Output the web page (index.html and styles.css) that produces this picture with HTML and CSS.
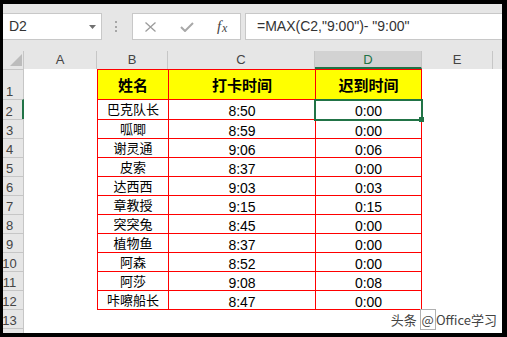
FILE: index.html
```html
<!DOCTYPE html>
<html>
<head>
<meta charset="utf-8">
<link rel="stylesheet" href="styles.css">
</head>
<body>
<div class="frame">
  <div class="fbar">
    <div class="namebox">
      <span class="ref">D2</span>
      <svg class="caret" width="7" height="4" viewBox="0 0 7 4"><polygon points="0,0 7,0 3.5,4" fill="#707070"/></svg>
    </div>
    <div class="grip"><i></i><i></i><i></i></div>
    <div class="fbtns">
      <span class="btn"><svg width="11" height="10" viewBox="0 0 11 10"><path d="M0.5 0.5 L10.5 9.5 M10.5 0.5 L0.5 9.5" stroke="#9c9c9c" stroke-width="1.3" fill="none"/></svg></span>
      <span class="btn"><svg width="14" height="10" viewBox="0 0 14 10"><path d="M1 5 L5 9 L13 1" stroke="#a8a8a8" stroke-width="2" fill="none"/></svg></span>
      <span class="btn fx"><i>f</i><i class="x">x</i></span>
    </div>
    <div class="finput">=MAX(C2,"9:00")- "9:00"</div>
  </div>
  <div class="sheet">
    <div class="ch corner"><svg width="20" height="18" viewBox="0 0 20 18"><polygon points="19,3 19,15 7,15" fill="#bcbcbc"/></svg></div>
    <div class="ch">A</div>
    <div class="ch">B</div>
    <div class="ch">C</div>
    <div class="ch sel">D</div>
    <div class="ch">E</div>
    <div class="ch last"></div>

    <div class="rh">1</div><div class="c"></div><div class="t h">姓名</div><div class="t h">打卡时间</div><div class="t h d">迟到时间</div><div class="c"></div><div class="c"></div>
    <div class="rh cur">2</div><div class="c"></div><div class="t n">巴克队长</div><div class="t m">8:50</div><div class="t m d active">0:00<div class="selbox"><div class="handle"></div></div></div><div class="c"></div><div class="c"></div>
    <div class="rh">3</div><div class="c"></div><div class="t n">呱唧</div><div class="t m">8:59</div><div class="t m d">0:00</div><div class="c"></div><div class="c"></div>
    <div class="rh">4</div><div class="c"></div><div class="t n">谢灵通</div><div class="t m">9:06</div><div class="t m d">0:06</div><div class="c"></div><div class="c"></div>
    <div class="rh">5</div><div class="c"></div><div class="t n">皮索</div><div class="t m">8:37</div><div class="t m d">0:00</div><div class="c"></div><div class="c"></div>
    <div class="rh">6</div><div class="c"></div><div class="t n">达西西</div><div class="t m">9:03</div><div class="t m d">0:03</div><div class="c"></div><div class="c"></div>
    <div class="rh">7</div><div class="c"></div><div class="t n">章教授</div><div class="t m">9:15</div><div class="t m d">0:15</div><div class="c"></div><div class="c"></div>
    <div class="rh">8</div><div class="c"></div><div class="t n">突突兔</div><div class="t m">8:45</div><div class="t m d">0:00</div><div class="c"></div><div class="c"></div>
    <div class="rh">9</div><div class="c"></div><div class="t n">植物鱼</div><div class="t m">8:37</div><div class="t m d">0:00</div><div class="c"></div><div class="c"></div>
    <div class="rh">10</div><div class="c"></div><div class="t n">阿森</div><div class="t m">8:52</div><div class="t m d">0:00</div><div class="c"></div><div class="c"></div>
    <div class="rh">11</div><div class="c"></div><div class="t n">阿莎</div><div class="t m">9:08</div><div class="t m d">0:08</div><div class="c"></div><div class="c"></div>
    <div class="rh">12</div><div class="c"></div><div class="t n">咔嚓船长</div><div class="t m">8:47</div><div class="t m d">0:00</div><div class="c"></div><div class="c"></div>
    <div class="rh">13</div><div class="c"></div><div class="c tb"></div><div class="c tb"></div><div class="c tb tbd"></div><div class="c"></div><div class="c"></div>
    <div class="rh"></div><div class="c"></div><div class="c"></div><div class="c"></div><div class="c"></div><div class="c"></div><div class="c"></div>
  </div>
  <div class="wm">头条 <span class="at">@</span>Office学习</div>
</div>
</body>
</html>
```

FILE: styles.css
```css
* {
  box-sizing: border-box;
  margin: 0;
  padding: 0;
}

body {
  margin: 0;
  width: 507px;
  height: 337px;
  overflow: hidden;
  background: #000;
}

.frame {
  position: relative;
  width: 507px;
  height: 337px;
  border-style: solid;
  border-color: #000;
  border-width: 4px 5px 4px 3px;
  background: #fff;
  display: flex;
  flex-direction: column;
}

/* formula bar */
.fbar {
  display: flex;
  align-items: flex-start;
  height: 47px;
  padding-top: 9px;
  background: #e6e6e6;
}

.namebox {
  width: 99px;
  height: 27px;
  background: #fff;
  border: 1px solid #c8c8c8;
  border-left: none;
  display: flex;
  align-items: center;
  padding-left: 6px;
}

.ref {
  font: 14px/25px "Liberation Sans", Arial, sans-serif;
  color: #333;
}

.caret {
  margin-left: auto;
  margin-right: 5px;
}

.grip {
  display: flex;
  flex-direction: column;
  gap: 2.5px;
  margin-left: 13px;
  margin-top: 8px;
}

.grip i {
  display: block;
  width: 2px;
  height: 2px;
  background: #a6a6a6;
}

.fbtns {
  display: flex;
  margin-left: 15px;
  width: 109px;
  height: 27px;
  background: #fff;
  border: 1px solid #c8c8c8;
}

.btn {
  flex: 1;
  display: flex;
  align-items: center;
  justify-content: center;
}

.fx {
  font: italic 15px/25px "Liberation Serif", serif;
  color: #444;
}

.fx .x {
  font-size: 12px;
  margin-left: 1px;
  position: relative;
  top: 2px;
}

.finput {
  flex: 1;
  margin-left: 4px;
  height: 27px;
  background: #fff;
  border: 1px solid #c8c8c8;
  border-right: none;
  padding-left: 11px;
  font: 14px/25px "Liberation Sans", Arial, sans-serif;
  color: #333;
  white-space: pre;
}

/* sheet grid */
.sheet {
  display: grid;
  grid-template-columns: 21px 73px 71px 147px 107px 71px 9px;
  grid-template-rows: 18px 30px 20px repeat(10, 19px) 19px 5px;
}

.ch {
  background: #e6e6e6;
  border-right: 1px solid #c6c6c6;
  text-align: center;
  font: 13px/18px "Liberation Sans", Arial, sans-serif;
  color: #444;
}

.ch.sel {
  background: #d2d2d2;
  color: #217346;
  border-bottom: 2px solid #217346;
}

.ch.last {
  border-right: none;
}

.corner svg {
  display: block;
}

.rh {
  background: #e6e6e6;
  border-top: 1px solid #c6c6c6;
  border-right: 1px solid #c6c6c6;
  display: flex;
  align-items: flex-end;
  justify-content: center;
  padding: 0 7px 1px 0;
  font: 13px/12px "Liberation Sans", Arial, sans-serif;
  color: #444;
}

.rh.cur {
  border-right: 2px solid #217346;
}

.c {
  background: #fff;
}

.t {
  border-top: 1px solid #f00;
  border-left: 1px solid #f00;
  text-align: center;
  color: #000;
}

.t.d {
  border-right: 1px solid #f00;
}

.t.h {
  background: #ff0;
  font: bold 15px/17px "Noto Sans CJK SC", sans-serif;
  padding-top: 6px;
}

.t.n {
  font: 13px/17px "Noto Sans CJK SC", sans-serif;
}

.t.m {
  font: 14px/19px "Liberation Sans", Arial, sans-serif;
  padding-top: 2px;
}

.tb {
  border-top: 1px solid #f00;
}

.tbd {
  margin-right: 1px;
}

.active {
  position: relative;
}

.selbox {
  position: absolute;
  top: -1px;
  left: -2px;
  right: -2px;
  bottom: -2px;
  border: 2px solid #217346;
}

.handle {
  position: absolute;
  right: -3px;
  bottom: -3px;
  width: 5px;
  height: 5px;
  background: #217346;
}

/* watermark */
.wm {
  position: absolute;
  right: 5px;
  bottom: 5px;
  font: 13px/16px "Noto Sans CJK SC", sans-serif;
  color: #444;
  white-space: pre;
}

.wm .at {
  border: 1px solid #b0b0b0;
  padding: 0 1px;
}
```
